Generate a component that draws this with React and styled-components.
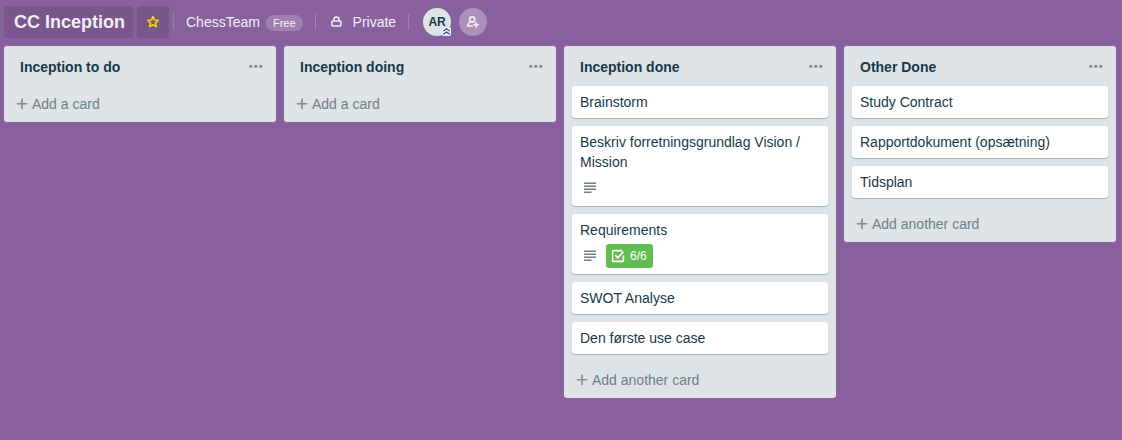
import React from "react";
import styled, { createGlobalStyle } from "styled-components";

const GlobalStyle = createGlobalStyle`
  *, *::before, *::after { box-sizing: border-box; }
  html, body { margin: 0; }
  body {
    background: #89609e;
    color: #17394d;
    font-family: "Liberation Sans", Arial, Helvetica, sans-serif;
    font-size: 14px;
    line-height: 20px;
  }
  button { font: inherit; border: 0; cursor: pointer; }
  h1, h2, ul { margin: 0; padding: 0; }
  ul { list-style: none; }
  svg { display: block; flex: none; }
`;

const Page = styled.div`
  min-height: 100vh;
  display: flex;
  flex-direction: column;
`;

const Header = styled.header`
  display: flex;
  align-items: center;
  padding: 6px 4px 8px;
  color: #f3eff6;
`;

const BoardName = styled.h1`
  height: 32px;
  padding: 0 8px 0 10px;
  border-radius: 3px;
  background: #7b568c;
  color: #f3eff6;
  font-size: 18px;
  line-height: 32px;
  font-weight: 700;
  white-space: nowrap;
`;

const StarButton = styled.button`
  display: grid;
  place-items: center;
  width: 32px;
  height: 32px;
  margin: 0 4px;
  padding: 0;
  border-radius: 3px;
  background: #7b568c;
  color: #f2d600;
`;

const Divider = styled.span`
  width: 1px;
  height: 16px;
  background: #a17fb2;
`;

const HeaderButton = styled.button`
  display: flex;
  align-items: center;
  height: 32px;
  padding: 0 12px;
  background: none;
  color: inherit;
  white-space: nowrap;
`;

const Plan = styled.span`
  margin: 1px 0 0 6px;
  padding: 0 7px;
  border-radius: 8px;
  background: #a180b1;
  font-size: 11px;
  line-height: 16px;
`;

const Privacy = styled(HeaderButton)`
  gap: 9px;
`;

const Members = styled.div`
  display: flex;
  gap: 8px;
  margin-left: 14px;
`;

const Round = styled.button`
  position: relative;
  display: grid;
  place-items: center;
  width: 28px;
  height: 28px;
  padding: 0;
  border-radius: 50%;
  background: ${(p) => (p.$solid ? "#dfe3e6" : "#ac90bb")};
  color: ${(p) => (p.$solid ? "#17394d" : "#f3eff6")};
  font-size: 12px;
  font-weight: 700;
`;

const AdminMark = styled.span`
  position: absolute;
  right: 0;
  bottom: 0;
  padding: 1px;
  border-radius: 2px;
  background: #f1f2f5;
`;

const Board = styled.main`
  display: flex;
  align-items: flex-start;
  gap: 8px;
  padding: 0 4px 8px;
`;

const List = styled.section`
  flex: 0 0 272px;
  border-radius: 3px;
  background: #dfe3e6;
`;

const ListHeader = styled.header`
  display: flex;
  align-items: center;
  justify-content: space-between;
  height: 40px;
  padding: 2px 4px 0 16px;
`;

const ListTitle = styled.h2`
  font-size: 14px;
  line-height: 20px;
  font-weight: 700;
`;

const MenuButton = styled.button`
  display: grid;
  place-items: center;
  width: 32px;
  height: 32px;
  padding: 0;
  background: none;
  color: #798d99;
`;

const Cards = styled.ul`
  display: flex;
  flex-direction: column;
  gap: 8px;
  padding: 0 8px 8px;
`;

const Card = styled.li`
  padding: 6px 8px;
  border-radius: 3px;
  background: #fff;
  box-shadow: 0 1px 0 #a5b4be;
`;

const Badges = styled.div`
  display: flex;
  align-items: center;
  gap: 6px;
  margin-top: 4px;
  height: 24px;
  color: #6b808c;
`;

const Checklist = styled.span`
  display: flex;
  align-items: center;
  gap: 4px;
  height: 24px;
  padding: 0 6px 0 4px;
  border-radius: 3px;
  background: #61bd4f;
  color: #fff;
  font-size: 12px;
`;

const AddCard = styled.button`
  display: flex;
  align-items: center;
  gap: 2px;
  width: 100%;
  height: 36px;
  padding: 0 10px;
  background: none;
  color: #6b808c;
`;

const StarIcon = () => (
  <svg width="16" height="16" viewBox="0 0 16 16" fill="none" stroke="currentColor" strokeWidth="1.6" strokeLinejoin="round" aria-hidden="true">
    <path d="M8 2.7 9.5 6l3.7.4-2.7 2.5.8 3.7L8 10.8l-3.3 1.8.8-3.7L2.8 6.4 6.5 6z" />
  </svg>
);

const LockIcon = () => (
  <svg width="16" height="16" viewBox="0 0 16 16" fill="none" stroke="currentColor" strokeWidth="1.5" aria-hidden="true">
    <rect x="3.9" y="7" width="9" height="4.9" rx="0.8" />
    <path d="M5.8 7V5.6a2.6 2.6 0 0 1 5.2 0V7" />
  </svg>
);

const AddMemberIcon = () => (
  <svg width="16" height="16" viewBox="0 0 16 16" fill="none" stroke="currentColor" strokeWidth="1.6" aria-hidden="true">
    <circle cx="7.2" cy="5.4" r="2.5" />
    <path d="M8.2 12H2.8c0-2.1 1-3.6 3-4.3M8.4 7.4l1 1M11.2 8v5.4M8.5 10.7h5.4" />
  </svg>
);

const AdminIcon = () => (
  <svg width="7" height="7" viewBox="0 0 7 7" fill="none" stroke="#2d3eb0" strokeWidth="1.2" aria-hidden="true">
    <path d="M.3 3 3.5.8 6.7 3M.3 6.3 3.5 4.1l3.2 2.2" />
  </svg>
);

const MoreIcon = () => (
  <svg width="16" height="16" viewBox="0 0 16 16" fill="currentColor" aria-hidden="true">
    <circle cx="2.8" cy="7.3" r="1.6" />
    <circle cx="7.8" cy="7.3" r="1.6" />
    <circle cx="12.8" cy="7.3" r="1.6" />
  </svg>
);

const PlusIcon = () => (
  <svg width="16" height="16" viewBox="0 0 16 16" fill="none" stroke="#798d99" strokeWidth="1.6" strokeLinecap="round" aria-hidden="true">
    <path d="M8 3.2v9.2M3.4 7.8h9.2" />
  </svg>
);

const DescriptionIcon = () => (
  <svg width="20" height="20" viewBox="0 0 20 20" fill="none" stroke="currentColor" strokeWidth="1.6" role="img" aria-label="This card has a description">
    <path d="M4 5.2h12M4 8.2h12M4 11.2h12M4 14.2h7.5" />
  </svg>
);

const CheckIcon = () => (
  <svg width="16" height="16" viewBox="0 0 16 16" fill="none" stroke="currentColor" strokeWidth="1.6" aria-hidden="true">
    <path d="M12 2.6H3.2a.6.6 0 0 0-.6.6v9.6c0 .3.3.6.6.6h9.6c.3 0 .6-.3.6-.6V7.6" />
    <path d="m5.3 7.2 2.5 2.7 5.6-6.3" />
  </svg>
);

const lists = [
  { title: "Inception to do", cards: [] },
  { title: "Inception doing", cards: [] },
  {
    title: "Inception done",
    cards: [
      { title: "Brainstorm" },
      { title: "Beskriv forretningsgrundlag Vision / Mission", description: true },
      { title: "Requirements", description: true, checklist: "6/6" },
      { title: "SWOT Analyse" },
      { title: "Den første use case" },
    ],
  },
  {
    title: "Other Done",
    cards: [
      { title: "Study Contract" },
      { title: "Rapportdokument (opsætning)" },
      { title: "Tidsplan" },
    ],
  },
];

export default function App() {
  return (
    <Page>
      <GlobalStyle />
      <Header>
        <BoardName>CC Inception</BoardName>
        <StarButton type="button" aria-label="Star board">
          <StarIcon />
        </StarButton>
        <Divider />
        <HeaderButton type="button">
          ChessTeam<Plan>Free</Plan>
        </HeaderButton>
        <Divider />
        <Privacy type="button">
          <LockIcon />
          Private
        </Privacy>
        <Divider />
        <Members>
          <Round type="button" $solid>
            AR
            <AdminMark>
              <AdminIcon />
            </AdminMark>
          </Round>
          <Round type="button" aria-label="Add member">
            <AddMemberIcon />
          </Round>
        </Members>
      </Header>
      <Board>
        {lists.map((list) => (
          <List key={list.title}>
            <ListHeader>
              <ListTitle>{list.title}</ListTitle>
              <MenuButton type="button" aria-label="List actions">
                <MoreIcon />
              </MenuButton>
            </ListHeader>
            {list.cards.length > 0 && (
              <Cards>
                {list.cards.map((card) => (
                  <Card key={card.title}>
                    {card.title}
                    {card.description && (
                      <Badges>
                        <DescriptionIcon />
                        {card.checklist && (
                          <Checklist>
                            <CheckIcon />
                            {card.checklist}
                          </Checklist>
                        )}
                      </Badges>
                    )}
                  </Card>
                ))}
              </Cards>
            )}
            <AddCard type="button">
              <PlusIcon />
              {list.cards.length > 0 ? "Add another card" : "Add a card"}
            </AddCard>
          </List>
        ))}
      </Board>
    </Page>
  );
}
